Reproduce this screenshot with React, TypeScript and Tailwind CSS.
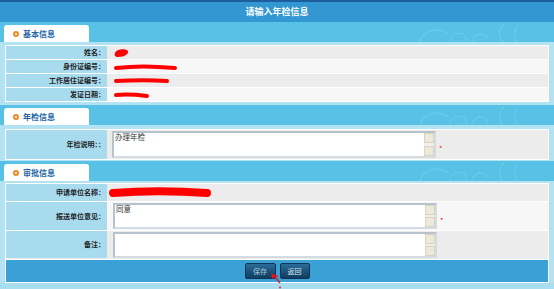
import React from "react";

const font = { fontFamily: '"Noto Sans CJK SC", "Noto Sans", sans-serif' };

// decorative cloud swirls on the blue bands
const Clouds = () => (
  <svg className="absolute right-0 top-0 h-full w-[140px]" viewBox="0 0 140 20" fill="none">
    <path d="M5 22 C8 8 25 4 34 12 M36 20 C36 10 50 8 52 16 C54 22 46 24 44 18" stroke="#7fd3ef" strokeWidth="1.2" opacity="0.5" />
    <path d="M58 20 C60 10 72 10 74 17 M90 2 C84 8 84 16 90 22 M104 4 C98 10 100 18 106 22" stroke="#7fd3ef" strokeWidth="1.2" opacity="0.5" />
  </svg>
);

const Tab = ({ title }: { title: string }) => (
  <div className="relative h-[20px] bg-[#57c2e6] pl-[4px] pt-[3px]">
    <Clouds />
    <div className="relative flex h-[17px] w-[85px] items-center gap-[4px] rounded-t-[3px] bg-white pl-[9px]">
      <span className="h-[6px] w-[6px] rounded-full border-[2px] border-[#f08a24]" />
      <span className="text-[8px] font-bold leading-none text-[#2466a6]">{title}</span>
    </div>
  </div>
);

const Label = ({ text, h }: { text: string; h: string }) => (
  <div className={`flex w-[101px] shrink-0 items-center justify-end bg-[#a9dbef] pr-[2px] text-[7px] font-bold text-[#1e1e1e] ${h}`}>
    {text}
  </div>
);

const Scribble = ({ d, w }: { d: string; w: number }) => (
  <svg width={w} height="12" viewBox={`0 0 ${w} 12`} className="ml-[6px]">
    <path d={d} stroke="#ff0000" strokeWidth="4" strokeLinecap="round" fill="none" />
  </svg>
);

const TextBox = ({ text, h }: { text?: string; h: string }) => (
  <div className={`flex w-[324px] border-[2px] border-[#b6c3cf] border-r-[#d4dbe2] border-b-[#d4dbe2] bg-white ${h}`}>
    <div className="-mt-[1px] flex-1 pl-[1px] text-[7.5px] leading-[9px] text-[#333]">{text}</div>
    <div className="flex w-[10px] flex-col justify-between bg-[#efefef]">
      <div className="h-[10px] border border-[#d8d4c0] bg-[#ece9d8]" />
      <div className="h-[10px] border border-[#d8d4c0] bg-[#ece9d8]" />
    </div>
  </div>
);

const Star = () => <span className="ml-[3px] mt-[14px] text-[7px] leading-none text-red-600">*</span>;

export default function App() {
  return (
    <div className="relative h-[289px] w-[554px] overflow-hidden bg-[#a9ddf0]" style={font}>
      <div className="relative flex h-[22px] items-center justify-center border-t-[2px] border-[#1d5e9e] bg-[#3397d1] text-[9px] font-bold text-white">
        请输入年检信息
      </div>

      <Tab title="基本信息" />
      <div className="bg-[#b3e2f3] px-[5px] pt-[3px] pb-[3px]">
        <div className="flex flex-col gap-px border border-white bg-white">
          <div className="flex bg-[#ececec]">
            <Label text="姓名：" h="h-[13px]" />
            <div className="flex items-center">
              <svg width="24" height="12" viewBox="0 0 24 12" className="ml-[5px]">
                <path d="M3 6 C4 2 14 1 16 4 C17 7 12 10 6 10 C3 10 2 8 3 6 Z" fill="#ff0000" />
              </svg>
            </div>
          </div>
          <div className="flex bg-[#f7f7f7]">
            <Label text="身份证编号：" h="h-[13px]" />
            <div className="flex items-center">
              <Scribble w={70} d="M3 7 C20 5 40 5 62 7" />
            </div>
          </div>
          <div className="flex bg-[#ececec]">
            <Label text="工作居住证编号：" h="h-[13px]" />
            <div className="flex items-center">
              <Scribble w={60} d="M3 6 C20 5 40 5 54 6" />
            </div>
          </div>
          <div className="flex bg-[#f7f7f7]">
            <Label text="发证日期：" h="h-[13px]" />
            <div className="flex items-center">
              <Scribble w={40} d="M3 6 C14 5 26 6 34 7" />
            </div>
          </div>
        </div>
      </div>

      <Tab title="年检信息" />
      <div className="bg-[#b3e2f3] px-[5px] pt-[4px] pb-[1px]">
        <div className="flex border border-white bg-[#ececec]">
          <Label text="年检说明：：" h="h-[29px]" />
          <div className="flex items-start py-[1px] pl-[5px]">
            <TextBox text="办理年检" h="h-[27px]" />
            <Star />
          </div>
        </div>
      </div>

      <Tab title="审批信息" />
      <div className="bg-[#b3e2f3] px-[5px] pt-[2px]">
        <div className="flex flex-col gap-px border border-white bg-white">
          <div className="flex bg-[#ececec]">
            <Label text="申请单位名称：" h="h-[17px]" />
            <div className="flex items-center">
              <svg width="104" height="14" viewBox="0 0 104 14" className="ml-[2px]">
                <path d="M4 7 C30 5 70 5 98 7" stroke="#ff0000" strokeWidth="8" strokeLinecap="round" fill="none" />
              </svg>
            </div>
          </div>
          <div className="flex bg-[#f7f7f7]">
            <Label text="报送单位意见：" h="h-[28px]" />
            <div className="flex items-start py-[1px] pl-[6px]">
              <TextBox text="同意" h="h-[26px]" />
              <Star />
            </div>
          </div>
          <div className="flex bg-[#ececec]">
            <Label text="备注：" h="h-[27px]" />
            <div className="flex items-start py-[1px] pl-[6px]">
              <TextBox h="h-[26px]" />
            </div>
          </div>
          <div className="flex h-[22px] items-center justify-center gap-[4px] bg-[#3aa0d6]">
            <button className="h-[16px] w-[31px] rounded-[2px] border border-[#0e3553] bg-gradient-to-b from-[#2b6c98] to-[#0f3d60] text-[7px] text-[#a9c6da]">
              保存
            </button>
            <button className="h-[16px] w-[30px] rounded-[2px] border border-[#0e3553] bg-gradient-to-b from-[#2b6c98] to-[#0f3d60] text-[7px] text-[#dbe8f1]">
              返回
            </button>
          </div>
        </div>
      </div>

      {/* red mouse pointer over the save button */}
      <svg className="absolute left-[268px] top-[271px]" width="16" height="18" viewBox="0 0 16 18">
        <path d="M3 3 L9 5 L7 6 L12 12" stroke="#e8101a" strokeWidth="1.2" fill="none" />
        <path d="M3 3 L8 4.5 L4.5 8 Z" fill="#e8101a" />
        <circle cx="12" cy="16.5" r="0.9" fill="#e8101a" />
      </svg>
    </div>
  );
}
